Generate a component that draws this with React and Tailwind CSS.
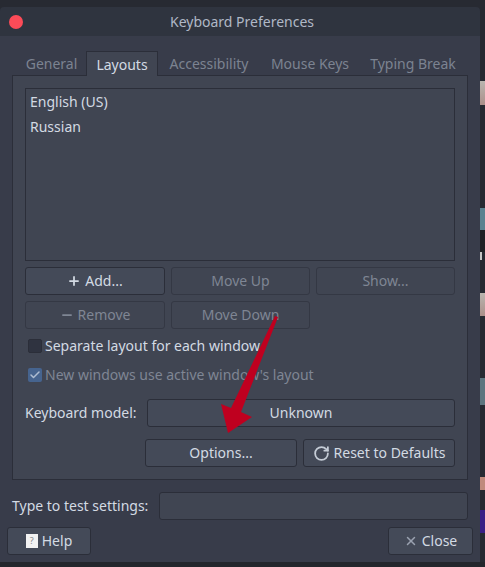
import React from 'react';
import { Plus, Minus, X, RotateCw, Check } from 'lucide-react';

const Btn = ({ children, disabled, className = '' }) => (
  <button
    className={`h-[28px] flex items-center justify-center gap-[4px] rounded-[3px] border ${
      disabled ? 'bg-[#404552] border-[#343844] text-[#7f8694]' : 'bg-[#444a58] border-[#2b2e39] text-[#d3dae3]'
    } ${className}`}
  >
    {children}
  </button>
);

const DesktopStrip = () => (
  <div className="w-[5px] h-full flex flex-col bg-[#262a32]">
    <div className="h-[74px] shrink-0" />
    <div className="h-[24px] shrink-0 bg-gradient-to-b from-[#b9b6b0] to-[#ab8f8a]" />
    <div className="h-[103px] shrink-0" />
    <div className="h-[22px] shrink-0 bg-[#5a8290]" />
    <div className="h-[22px] shrink-0 bg-[#1f2126]" />
    <div className="h-[8px] w-[2px] shrink-0 bg-[#c4c4c4]" />
    <div className="h-[33px] shrink-0" />
    <div className="h-[23px] shrink-0 bg-gradient-to-b from-[#b9b6b0] to-[#ab8f8a]" />
    <div className="h-[62px] shrink-0" />
    <div className="h-[27px] shrink-0 bg-[#5d7680]" />
    <div className="h-[72px] shrink-0" />
    <div className="h-[13px] shrink-0 bg-[#c08a7c]" />
    <div className="h-[20px] shrink-0" />
    <div className="h-[23px] shrink-0 bg-[#3a1f86]" />
    <div className="flex-1" />
  </div>
);

export default function App() {
  return (
    <div className="relative w-[485px] h-[567px] overflow-hidden flex flex-col bg-[#272a32] text-[14px] leading-[20px] text-[#d3dae3] font-['Noto_Sans',sans-serif]">
      <div className="h-[7px] shrink-0" />
      <div className="flex-1 flex min-h-0">
        <div className="w-[480px] flex flex-col">
          {/* Title bar */}
          <div className="h-[29px] shrink-0 flex items-center bg-[#2f343f] rounded-t-[4px] text-[#afb8c6]">
            <div className="w-[14px] h-[14px] ml-[9px] rounded-full bg-[#fc4b58]" />
            <div className="flex-1 text-center pr-[19px] pt-[1px]">Keyboard Preferences</div>
          </div>

          <div className="flex-1 flex flex-col bg-[#383c4a] px-[7px] pb-[7px]">
            <div className="px-[5px]">
              {/* Tabs */}
              <div className="flex h-[24px] mt-[15px] pl-[5px] items-stretch relative z-10 text-[#7c8391]">
                <div className="w-[69px] pt-[1px] flex items-center justify-center">General</div>
                <div className="w-[72px] h-[25px] pt-[1px] flex items-center justify-center bg-[#404552] border border-b-0 border-[#2b2e39] text-[#d3dae3]">
                  Layouts
                </div>
                <div className="w-[102px] pt-[1px] flex items-center justify-center">Accessibility</div>
                <div className="w-[100px] pt-[1px] flex items-center justify-center">Mouse Keys</div>
                <div className="w-[106px] pt-[1px] flex items-center justify-center whitespace-nowrap">Typing Break</div>
              </div>

              {/* Layouts panel */}
              <div className="h-[405px] bg-[#404552] border border-[#2b2e39] px-[12px] pt-[12px] flex flex-col">
                <div className="h-[173px] shrink-0 border border-[#2b2e39] px-[4px]">
                  <div className="h-[25px] flex items-center">English (US)</div>
                  <div className="h-[25px] flex items-center">Russian</div>
                </div>

                <div className="grid grid-cols-[140px_139px_139px] gap-x-[6px] gap-y-[6px] mt-[6px]">
                  <Btn>
                    <Plus size={14} strokeWidth={3} /> Add...
                  </Btn>
                  <Btn disabled>Move Up</Btn>
                  <Btn disabled>Show...</Btn>
                  <Btn disabled>
                    <Minus size={14} strokeWidth={3} /> Remove
                  </Btn>
                  <Btn disabled>Move Down</Btn>
                </div>

                <label className="flex items-center h-[20px] mt-[7px] pl-[3px]">
                  <span className="w-[14px] h-[14px] rounded-[2px] bg-[#2f3340] border border-[#2b2e39]" />
                  <span className="ml-[3px]">Separate layout for each window</span>
                </label>
                <label className="flex items-center h-[20px] mt-[9px] pl-[3px] text-[#7f8694]">
                  <span className="w-[14px] h-[14px] rounded-[2px] bg-[#46648f] flex items-center justify-center">
                    <Check size={12} strokeWidth={3} className="text-[#aebdd2]" />
                  </span>
                  <span className="ml-[3px]">New windows use active window's layout</span>
                </label>

                <div className="flex items-center mt-[14px]">
                  <span className="w-[122px]">Keyboard model:</span>
                  <Btn className="flex-1">Unknown</Btn>
                </div>
                <div className="flex justify-end gap-[6px] mt-[12px]">
                  <Btn className="w-[152px]">Options...</Btn>
                  <Btn className="w-[152px] gap-[2px]">
                    <RotateCw size={17} strokeWidth={2.5} className="text-[#c5ccd6]" /> Reset to Defaults
                  </Btn>
                </div>
              </div>

              {/* Test entry */}
              <div className="flex items-center mt-[12px]">
                <span className="w-[147px]">Type to test settings:</span>
                <div className="flex-1 h-[28px] rounded-[3px] bg-[#404552] border border-[#2b2e39]" />
              </div>
            </div>

            {/* Footer */}
            <div className="flex justify-between mt-[7px]">
              <Btn className="w-[84px]">
                <span className="w-[12px] h-[14px] bg-[#f2f2f2] text-[#8a8a8a] text-[9px] leading-[14px] text-center">?</span>
                Help
              </Btn>
              <Btn className="w-[85px]">
                <X size={14} strokeWidth={2.5} className="text-[#9aa2b0]" /> Close
              </Btn>
            </div>
          </div>
        </div>
        <DesktopStrip />
      </div>
      <div className="h-[5px] shrink-0 bg-[#23262c]" />

      {/* Annotation arrow drawn over the screenshot */}
      <svg className="absolute left-0 top-0 pointer-events-none" width="485" height="567">
        <polygon points="275,316 278,317 241,412 252,417 228,433 221,404 231,408" fill="#bf001f" />
      </svg>
    </div>
  );
}
